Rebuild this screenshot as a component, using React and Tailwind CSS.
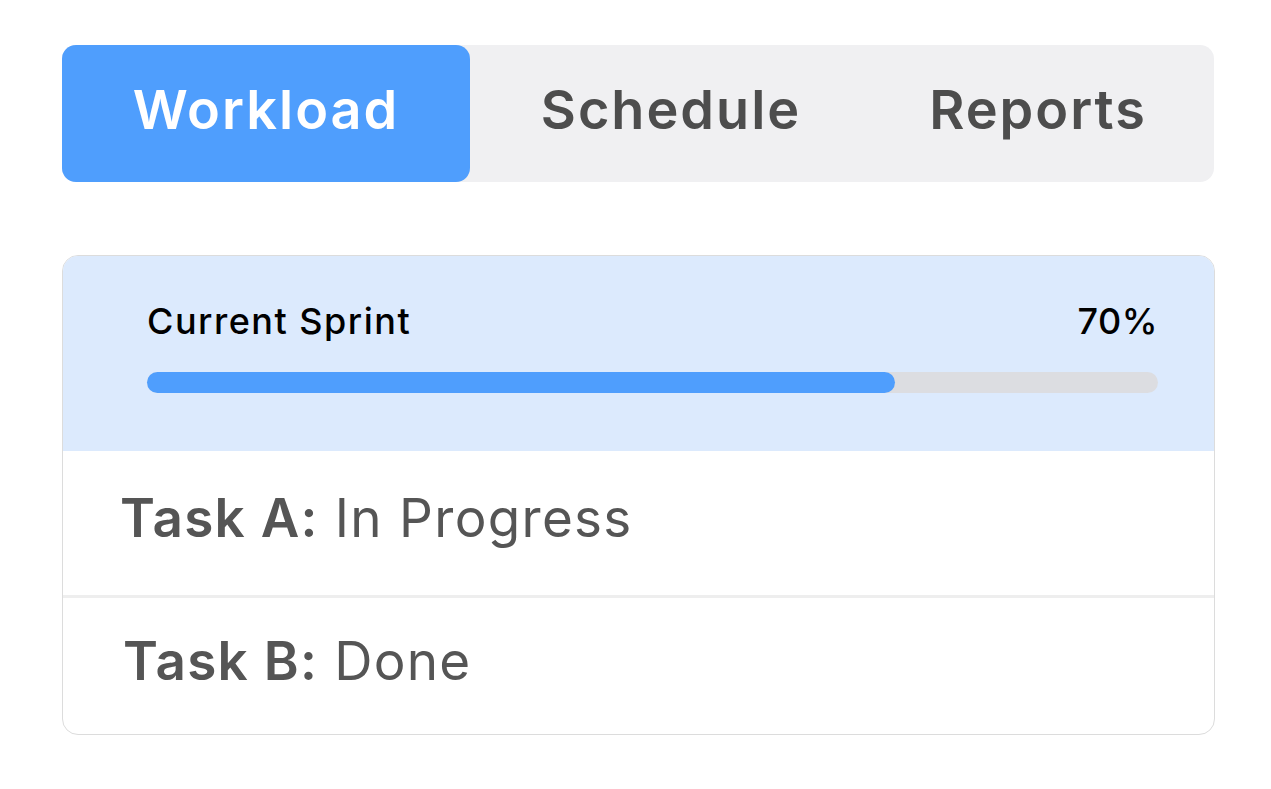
import React from "react";

const tabs = [
  { label: "Workload", width: "w-[408px]" },
  { label: "Schedule", width: "w-[402px]" },
  { label: "Reports", width: "flex-1" },
];

const tasks = [
  { name: "Task A:", status: "In Progress", pad: "pl-[57px]", h: "h-[147px]" },
  { name: "Task B:", status: "Done", pad: "pl-[60px]", h: "h-[136px]" },
];

export default function App() {
  const progress = 74;

  return (
    <div className="min-h-screen bg-white pt-[45px] px-[62px] font-['Inter',sans-serif]">
      {/* Tabs */}
      <div className="flex h-[137px] w-[1152px] rounded-[14px] bg-[#f0f0f2]">
        {tabs.map((tab, i) => (
          <button
            key={tab.label}
            className={`${tab.width} flex items-center justify-center rounded-[14px] pb-[9px] text-[54px] font-semibold tracking-[2px] ${
              i === 0 ? "bg-[#4f9efd] text-white" : "text-[#4d4d4d]"
            } ${i === 2 ? "pr-[10px]" : ""}`}
          >
            {tab.label}
          </button>
        ))}
      </div>

      {/* Card */}
      <div className="mt-[73px] w-[1153px] overflow-hidden rounded-[16px] border border-[#dcdcdc]">
        <div className="h-[195px] bg-[#dceafd] pl-[84px] pr-[56px] pt-[38px]">
          <div className="flex items-center justify-between text-[36px] font-medium text-black">
            <span className="tracking-[1.5px]">Current Sprint</span>
            <span className="tracking-[0.5px]">70%</span>
          </div>
          <div className="mt-[24px] h-[21px] w-full rounded-full bg-[#dcdde1]">
            <div
              className="h-full rounded-full bg-[#4f9efd]"
              style={{ width: `${progress}%` }}
            />
          </div>
        </div>
        {tasks.map((t, i) => (
          <div
            key={t.name}
            className={`${t.h} ${t.pad} flex items-center pb-[8px] text-[53px] tracking-[1.3px] text-[#555555] ${
              i === 0 ? "border-b-[3px] border-[#eeeeee]" : ""
            }`}
          >
            <span className="font-semibold">{t.name}</span>
            <span className="ml-[16px] font-normal">{t.status}</span>
          </div>
        ))}
      </div>
    </div>
  );
}
